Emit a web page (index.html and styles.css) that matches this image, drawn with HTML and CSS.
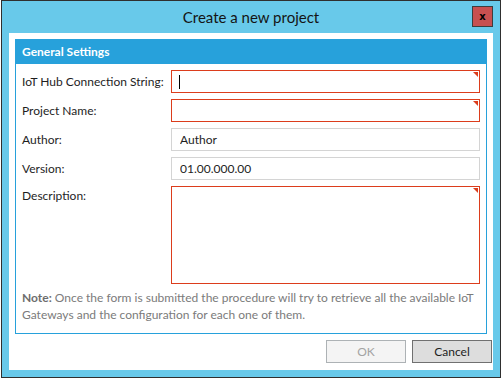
FILE: index.html
```html
<!DOCTYPE html>
<html lang="en">
<head>
    <meta charset="UTF-8">
    <title>Create a new project</title>
    <link rel="stylesheet" href="styles.css">
</head>
<body>
    <div class="window">
        <!-- Title Bar -->
        <div class="titlebar">
            <span class="title">Create a new project</span>
            <button class="close-btn">x</button>
        </div>

        <!-- Client Area -->
        <div class="client">
            <div class="group">
                <div class="group-header">General Settings</div>

                <div class="group-body">
                    <div class="row">
                        <label>IoT Hub Connection String:</label>
                        <span class="field required">
                            <input type="text">
                            <span class="caret"></span>
                        </span>
                    </div>
                    <div class="row">
                        <label>Project Name:</label>
                        <span class="field required">
                            <input type="text">
                        </span>
                    </div>
                    <div class="row">
                        <label>Author:</label>
                        <span class="field">
                            <input type="text" value="Author">
                        </span>
                    </div>
                    <div class="row">
                        <label>Version:</label>
                        <span class="field">
                            <input type="text" value="01.00.000.00">
                        </span>
                    </div>
                    <div class="row row-top">
                        <label>Description:</label>
                        <span class="field required">
                            <textarea></textarea>
                        </span>
                    </div>

                    <p class="note"><b>Note:</b> Once the form is submitted the procedure will try to retrieve all the available IoT Gateways and the configuration for each one of them.</p>
                </div>
            </div>

            <!-- Dialog Buttons -->
            <div class="buttons">
                <button class="btn" disabled>OK</button>
                <button class="btn btn-default">Cancel</button>
            </div>
        </div>
    </div>
</body>
</html>
```

FILE: styles.css
```css
/* Reset */
* {
    box-sizing: border-box;
    margin: 0;
    padding: 0;
}

body {
    font-family: Lato, 'Noto Sans', sans-serif;
    font-size: 12px;
    color: #1e1e1e;
    background: #fff;
}

/* Window frame */
.window {
    width: 500px;
    height: 378px;
    margin-left: 1px;
    background: #68c9ea;
    border: 1px solid #2f2f2f;
    display: flex;
    flex-direction: column;
}

.titlebar {
    height: 32px;
    display: grid;
    grid-template-columns: 1fr auto 1fr;
    align-items: center;
}

.title {
    grid-column: 2;
    font-size: 15px;
    color: #141414;
    white-space: nowrap;
}

.close-btn {
    grid-column: 3;
    justify-self: end;
    align-self: start;
    width: 21px;
    height: 21px;
    margin-top: 5px;
    margin-right: 7px;
    background: #c75050;
    border: 1px solid #3d3d3d;
    font-family: 'DejaVu Sans', sans-serif;
    font-size: 10px;
    font-weight: bold;
    line-height: 16px;
    color: #000;
}

/* Client area */
.client {
    flex: 1;
    margin: 0 7px 7px 7px;
    background: #fff;
    padding: 6px 1px 6px 6px;
    display: flex;
    flex-direction: column;
}

.group {
    margin-right: 5px;
    border: 1px solid #27a1db;
}

.group-header {
    height: 25px;
    margin: -1px -1px 0 -1px;
    background: #27a1db;
    color: #fff;
    font-weight: bold;
    line-height: 16px;
    padding: 5px 7px 0 7px;
}

.group-body {
    padding: 6px 6px 10px 6px;
}

.row {
    display: flex;
    align-items: center;
    margin-bottom: 6px;
}

.row-top {
    align-items: flex-start;
}

.row label {
    width: 149px;
    white-space: nowrap;
}

.row-top label {
    padding-top: 2px;
}

.field {
    position: relative;
    flex: 1;
    display: flex;
}

.field input,
.field textarea {
    width: 100%;
    height: 23px;
    border: 1px solid #d4d4d4;
    padding: 0 8px;
    font-family: inherit;
    font-size: 12px;
    color: #1e1e1e;
    outline: none;
    resize: none;
}

.field textarea {
    height: 98px;
}

.field.required input,
.field.required textarea {
    border-color: #dc3d1c;
}

/* red validation marker in the corner */
.field.required::after {
    content: '';
    position: absolute;
    top: 2px;
    right: 2px;
    border-top: 5px solid #dc3d1c;
    border-left: 5px solid transparent;
}

.caret {
    position: absolute;
    left: 8px;
    top: 5px;
    width: 1px;
    height: 14px;
    background: #000;
}

.note {
    color: #7b7b7b;
    line-height: 17px;
    margin-top: -1px;
}

.note b {
    color: #6e6e6e;
}

/* Buttons */
.buttons {
    margin-top: 6px;
    display: flex;
    justify-content: flex-end;
    gap: 6px;
}

.btn {
    width: 80px;
    height: 23px;
    font-family: inherit;
    font-size: 12px;
    background: #dddddd;
    border: 1px solid #707070;
    color: #1e1e1e;
}

.btn:disabled {
    background: #f4f4f4;
    border-color: #adb2b5;
    color: #a3a3a3;
}
```
